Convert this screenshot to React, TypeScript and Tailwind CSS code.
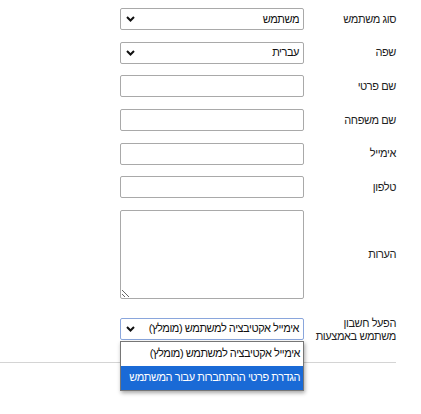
import React from 'react';

const Chevron = () => (
  <svg width="9" height="6" viewBox="0 0 9 6" className="shrink-0">
    <polyline points="1,1 4.5,4.5 8,1" fill="none" stroke="#111" strokeWidth="2" />
  </svg>
);

const Row: React.FC<{ label: React.ReactNode; children: React.ReactNode }> = ({ label, children }) => (
  <div className="flex items-center">
    <div className="w-[92px] shrink-0 whitespace-nowrap text-[11px] tracking-[-0.4px] leading-[13px] text-[#222]">{label}</div>
    {children}
  </div>
);

const SelectBox: React.FC<{ value: string; active?: boolean }> = ({ value, active }) => (
  <div
    className={`w-[184px] h-[22px] flex items-center justify-between pr-[4px] pl-[5px] rounded-[2px] border bg-white text-[11px] tracking-[-0.45px] text-[#111] whitespace-nowrap ${
      active ? 'border-[#8aa6dc]' : 'border-[#a9a9a9]'
    }`}
  >
    <span>{value}</span>
    <Chevron />
  </div>
);

const TextBox = () => <div className="w-[184px] h-[22px] rounded-[2px] border border-[#a9a9a9] bg-white" />;

export default function App() {
  return (
    <div dir="rtl" className="w-[421px] h-[414px] bg-white pr-[25px] pt-[8px]" style={{ fontFamily: '"Liberation Sans", Arial, sans-serif' }}>
      <div className="flex flex-col gap-[11.7px]">
        <Row label="סוג משתמש">
          <SelectBox value="משתמש" />
        </Row>
        <Row label="שפה">
          <SelectBox value="עברית" />
        </Row>
        <Row label="שם פרטי">
          <TextBox />
        </Row>
        <Row label="שם משפחה">
          <TextBox />
        </Row>
        <Row label="אימייל">
          <TextBox />
        </Row>
        <Row label="טלפון">
          <TextBox />
        </Row>
        <Row label="הערות">
          <textarea className="block w-[184px] h-[89px] rounded-[2px] border border-[#a9a9a9] bg-white outline-none resize" />
        </Row>
      </div>
      <div className="mt-[15px] flex items-center">
        <div className="w-[92px] shrink-0 whitespace-nowrap text-[11px] tracking-[-0.4px] leading-[13px] text-[#222] pt-[3px]">
          הפעל חשבון
          <br />
          משתמש באמצעות
        </div>
        <div className="relative">
          <SelectBox value="אימייל אקטיבציה למשתמש (מומלץ)" active />
          <div className="absolute top-[23px] right-0 z-10 w-[184px] border border-[#767676] bg-white shadow-[1px_2px_4px_rgba(0,0,0,0.35)] text-[11px] tracking-[-0.45px] whitespace-nowrap">
            <div className="h-[24px] flex items-center pr-[3px] text-[#111]">אימייל אקטיבציה למשתמש (מומלץ)</div>
            <div className="h-[24px] flex items-center pr-[3px] bg-[#1a6ad6] text-white">הגדרת פרטי ההתחברות עבור המשתמש</div>
          </div>
        </div>
      </div>
      <div className="mt-[19px] border-t border-[#d4d4d4]" />
    </div>
  );
}
